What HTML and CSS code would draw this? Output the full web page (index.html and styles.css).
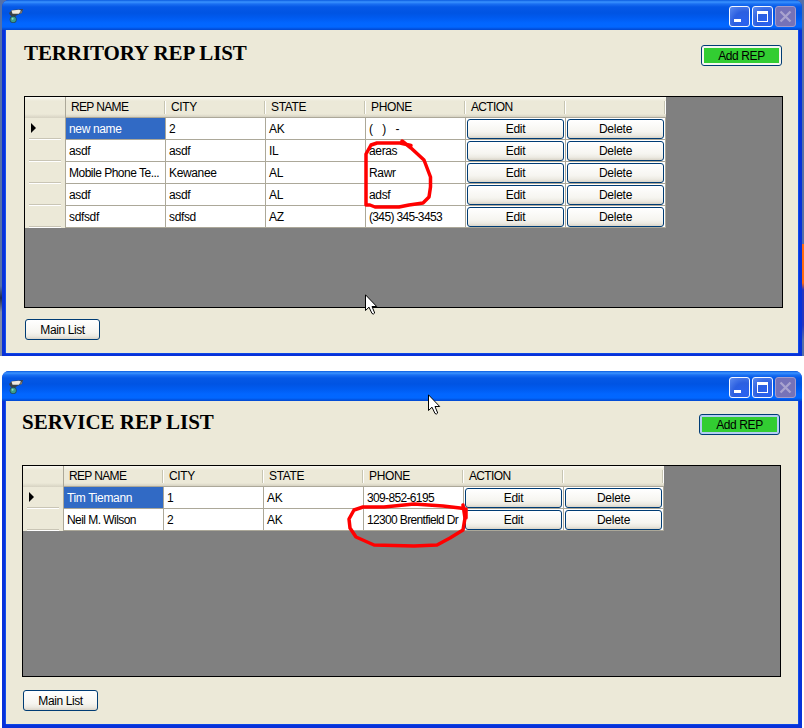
FILE: index.html
```
<!DOCTYPE html>
<html lang="en">
<head>
<meta charset="utf-8">
<title>Rep lists</title>
<link rel="stylesheet" href="styles.css">
</head>
<body>
<svg class="defs" width="0" height="0" aria-hidden="true">
  <symbol id="camera" viewBox="0 0 16 16">
    <path d="M0 4 L3 1 L14 0 L13 4 L8 6 L6 8 L3 8 L1 6Z" fill="#39414a"/>
    <path d="M2.5 1.5 L10 .8 L12 1.600 L10 4.800 L3.500 4.800Z" fill="#eeeae2"/>
    <path d="M10.500 4.500 L13.500 .8 L12.600 4.200Z" fill="#8a7d70"/>
    <circle cx="4.200" cy="10.500" r="3.500" fill="#244b55"/>
    <circle cx="4.200" cy="10.500" r="2.700" fill="#3b9d8c"/>
    <circle cx="3.600" cy="9.800" r="1" fill="#8dddc4"/>
  </symbol>
  <symbol id="pointer" viewBox="0 0 13 22">
    <path d="M.5 .8 V16.5 L4 13.2 L7 19.5 Q8.5 20.8 9.7 19 L7 12.5 H11.7Z" fill="#fff" stroke="#000" stroke-width="1"/>
  </symbol>
</svg>

<div class="screen">
  <section class="window first">
    <header class="titlebar">
      <svg class="app-icon"><use href="#camera"/></svg>
      <div class="controls"><i class="ctl min"></i><i class="ctl max"></i><i class="ctl close"><svg viewBox="0 0 19 19"><path d="M4.5 4.5 14.5 14.5M14.5 4.5 4.5 14.5"/></svg></i></div>
    </header>
    <main class="client">
      <div class="heading"><h1>TERRITORY REP LIST</h1><button class="btn add"><span>Add REP</span></button></div>
      <div class="grid">
        <div class="row head"><div class="rh"></div><div class="tight">REP NAME</div><div>CITY</div><div>STATE</div><div>PHONE</div><div class="tight">ACTION</div><div></div></div>
        <div class="row"><div class="rh current"></div><div class="selected">new name</div><div>2</div><div>AK</div><div class="mask">(&nbsp;&nbsp; )&nbsp;&nbsp; -</div><div class="act"><button class="btn">Edit</button></div><div class="act"><button class="btn">Delete</button></div></div>
        <div class="row"><div class="rh"></div><div>asdf</div><div>asdf</div><div>IL</div><div>aeras</div><div class="act"><button class="btn">Edit</button></div><div class="act"><button class="btn">Delete</button></div></div>
        <div class="row"><div class="rh"></div><div class="long">Mobile Phone Te...</div><div>Kewanee</div><div>AL</div><div>Rawr</div><div class="act"><button class="btn">Edit</button></div><div class="act"><button class="btn">Delete</button></div></div>
        <div class="row"><div class="rh"></div><div>asdf</div><div>asdf</div><div>AL</div><div>adsf</div><div class="act"><button class="btn">Edit</button></div><div class="act"><button class="btn">Delete</button></div></div>
        <div class="row"><div class="rh"></div><div>sdfsdf</div><div>sdfsd</div><div>AZ</div><div class="tight">(345) 345-3453</div><div class="act"><button class="btn">Edit</button></div><div class="act"><button class="btn">Delete</button></div></div>
      </div>
      <button class="btn main-list">Main List</button>
    </main>
  </section>

  <section class="window second">
    <header class="titlebar">
      <svg class="app-icon"><use href="#camera"/></svg>
      <div class="controls"><i class="ctl min"></i><i class="ctl max"></i><i class="ctl close"><svg viewBox="0 0 19 19"><path d="M4.5 4.5 14.5 14.5M14.5 4.5 4.5 14.5"/></svg></i></div>
    </header>
    <main class="client">
      <div class="heading"><h1>SERVICE REP LIST</h1><button class="btn add default"><span>Add REP</span></button></div>
      <div class="grid">
        <div class="row head"><div class="rh"></div><div class="tight">REP NAME</div><div>CITY</div><div>STATE</div><div>PHONE</div><div class="tight">ACTION</div><div></div></div>
        <div class="row"><div class="rh current"></div><div class="selected">Tim Tiemann</div><div>1</div><div>AK</div><div class="tight">309-852-6195</div><div class="act"><button class="btn">Edit</button></div><div class="act"><button class="btn">Delete</button></div></div>
        <div class="row"><div class="rh"></div><div class="name">Neil M. Wilson</div><div>2</div><div>AK</div><div class="tight">12300 Brentfield Dr</div><div class="act"><button class="btn">Edit</button></div><div class="act"><button class="btn">Delete</button></div></div>
      </div>
      <button class="btn main-list">Main List</button>
    </main>
  </section>

  <svg class="overlay" viewBox="0 0 804 728">
    <use href="#pointer" x="365" y="294" width="13" height="22"/>
    <use href="#pointer" x="428" y="394" width="13" height="22"/>
    <g class="marker">
      <path d="M411 145.500 L400 143 H377 L371 145 L366 154 V205 L370 205 L375 207 H399 L409 205 L423 203 L429 197 L430.500 187 V177 L424 160 L411 148 L402 141"/>
      <path d="M466 518 V509 L460 508 L443 506 L414 504 L384 507 H363 L354 510 L349 519 L350 528 L356 537 L374 545 L414 546 L437 545 L450 538 L463 530 L465 518 L463 505"/>
    </g>
  </svg>
</div>
</body>
</html>
```
FILE: styles.css
```
*, *::before, *::after { box-sizing: border-box; }
body { margin: 0; background: #fff; font: 12px/14px "Liberation Sans", Arial, sans-serif; color: #000; }
.defs { position: absolute; }
.screen {
  position: relative; width: 804px; height: 728px; overflow: hidden;
  background:
    linear-gradient(#5470a8 0 244px, #ff6a10 244px 283px, #2436c0 290px 325px, #5470a8 340px) right top / 10px 356px no-repeat,
    linear-gradient(#5470a8 0 286px, #1c2a50 298px, #7f8ba8 312px 356px) left top / 10px 356px no-repeat,
    #fff;
}

.window { display: flex; flex-direction: column; margin: 0 2px; background: #0831d9; border-radius: 7px 7px 0 0; }
.first { height: 356px; }
.second { height: 357px; margin-top: 15px; }
.titlebar {
  flex: none; display: flex; justify-content: space-between; height: 30px; padding: 6px 6px 0 6px;
  border-radius: 7px 7px 0 0;
  background: linear-gradient(#0a5be0 0, #3a93ff 2px, #1a6ff2 4px, #0558e6 7px, #0054e3 13px, #005bf0 18px, #0266ff 23px, #0267ff 27px, #0250dd 29px, #0148d0 30px);
}
.app-icon { width: 16px; height: 16px; margin: 3px 0 0 1px; }
.controls { display: flex; gap: 2px; }
.ctl {
  display: block; position: relative; width: 21px; height: 21px; border: 1px solid #f4f7ff; border-radius: 3px;
  background: radial-gradient(circle at 75% 80%, #2a62f0, #2c5fe0 50%, #5d8cf0);
}
.min::after { content: ""; position: absolute; left: 4px; top: 12px; width: 7px; height: 3px; background: #fff; }
.max::after { content: ""; position: absolute; left: 4px; top: 4px; width: 11px; height: 11px; border: 1px solid #fff; border-top-width: 3px; }
.close { background: #7672b8; border-color: #a29bcc; }
.close svg { display: block; width: 19px; height: 19px; stroke: #a9a3cf; stroke-width: 2.3; }

.client { flex: 1; margin: 0 4px 3px; padding: 15px 15px 0 18px; background: #ece9d8; box-shadow: -1px 0 #1250ee, 1px 0 #0d4bec, 0 1px #0b45e6; }
.second .client { margin-bottom: 4px; padding: 13px 17px 0 16px; }
.heading { display: flex; justify-content: space-between; height: 51px; padding-right: 1px; }
h1 { margin: -4px 0 0; font: bold 21px/24px "Liberation Serif", "Times New Roman", serif; letter-spacing: -.1px; white-space: nowrap; }
.second h1 { letter-spacing: 0; }

.btn {
  display: flex; align-items: center; justify-content: center; height: 21px; padding: 0; border: 1px solid #003c74; border-radius: 3px;
  background: linear-gradient(#fff, #f6f5f0 65%, #eceae2 85%, #d9d4c8);
  font: inherit; letter-spacing: -.25px; color: #000;
}
.add { width: 81px; padding: 2px; background: #f7f6f1; letter-spacing: -.4px; }
.add span { flex: 1; height: 15px; line-height: 16px; background: #32cd32; }
.add.default { background: #b4cdf3; }
.main-list { width: 75px; margin: 11px 0 0 1px; letter-spacing: -.4px; }
.second .main-list { margin-top: 13px; }

.grid { height: 212px; border: 1px solid #000; background: #808080; }
.row { display: grid; grid-template-columns: 41px repeat(6, 100px); width: 641px; height: 22px; }
.row > div { padding: 4px 0 0 3px; border-right: 1px solid #aca899; border-bottom: 1px solid #aca899; background: #fff; letter-spacing: -.35px; white-space: nowrap; overflow: hidden; }
.row > .long { letter-spacing: -.5px; }
.row > .name { letter-spacing: -.55px; }
.row > .tight { letter-spacing: -.65px; }
.row > .mask { letter-spacing: -.2px; }
.row > .selected { background: #316ac5; color: #fff; }
.row > .rh { position: relative; padding: 0; border-bottom: 0; background: #ece9d8; }
.row > .rh::after { content: ""; position: absolute; left: 4px; right: 4px; bottom: 0; height: 2px; background: linear-gradient(#c9c5b5 50%, #fff 50%); }
.current::before { content: ""; position: absolute; left: 6px; top: 5px; border: solid transparent; border-width: 5px 0 5px 5px; border-left-color: #000; }
.row.head { height: 21px; }
.row.head > div { position: relative; padding: 3px 0 0 5px; border-right: 0; background: linear-gradient(#faf9f2, #ece9d8 4px, #ece9d8 17px, #d6d2c2); }
.row.head > div:not(.rh)::after { content: ""; position: absolute; right: 0; top: 4px; width: 2px; height: 13px; background: linear-gradient(90deg, #c7c5b2 50%, #fff 50%); }
.row.head > .rh { border-right: 1px solid #aca899; }
.row.head > .rh::after { display: none; }
.row > .act { padding: 0 0 0 1px; }
.act .btn { width: 97px; height: 20px; margin-top: 1px; }

.overlay { position: absolute; inset: 0; width: 804px; height: 728px; pointer-events: none; }
.marker { fill: none; stroke: #f00; stroke-width: 3.5; stroke-linejoin: round; stroke-linecap: round; }
```
